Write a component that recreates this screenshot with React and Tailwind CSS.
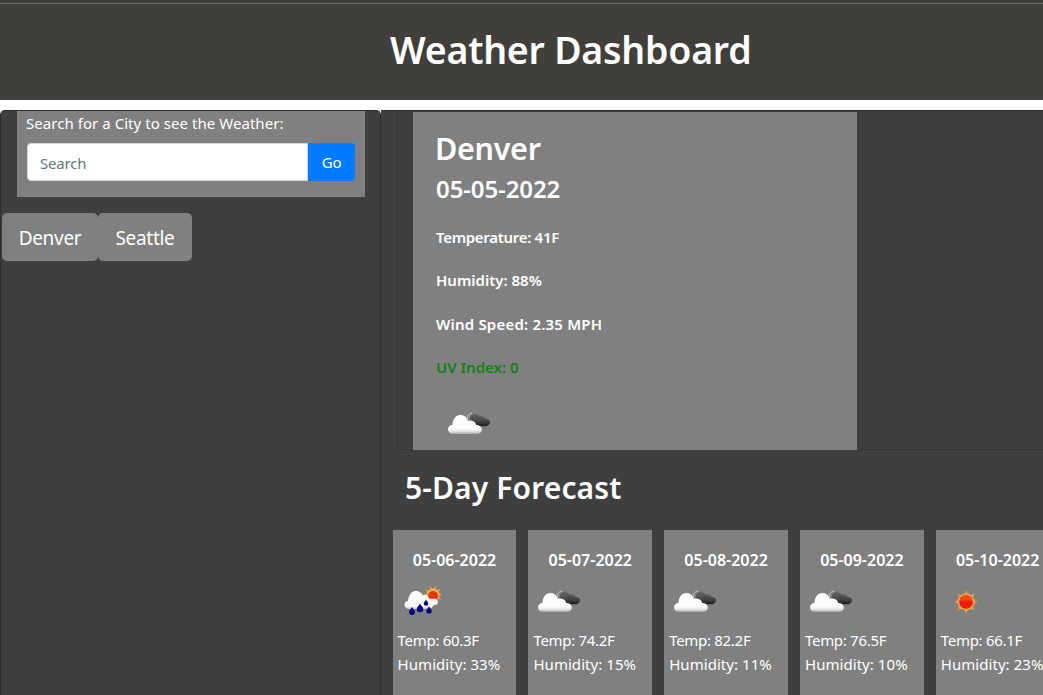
import React from "react";

function CloudIcon() {
  return (
    <svg width="50" height="50" viewBox="0 0 50 50" className="block">
      <defs>
        <linearGradient id="cw" x1="0" y1="0" x2="0" y2="1">
          <stop offset="0" stopColor="#ffffff" />
          <stop offset="0.72" stopColor="#fbfbfb" />
          <stop offset="0.86" stopColor="#e4e4e4" />
          <stop offset="1" stopColor="#a8a8a8" />
        </linearGradient>
        <linearGradient id="cd" x1="0" y1="0" x2="0" y2="1">
          <stop offset="0" stopColor="#666666" />
          <stop offset="0.6" stopColor="#444444" />
          <stop offset="1" stopColor="#1e1e1e" />
        </linearGradient>
      </defs>
      <path d="M24.500 23c-.8-3 .8-6.300 4.500-7" fill="none" stroke="#d0d0d0" strokeWidth="1" />
      <path d="M27 23c-.5-3 1.500-6 4.500-6 2.500 0 4.300 1 5.300 2.500 2.500-.5 4.500.3 5.500 2 2.700.2 4.700 1.700 4.700 3.700 0 2.300-2 4-5 4H32c-3 0-4.500-3-5-6.200z" fill="url(#cd)" />
      <path d="M10 37c-3 0-5-1.900-5-4.500 0-2.600 1.900-4.500 4.500-4.700.2-5.600 3.500-9.800 8-9.800 3.500 0 6.200 2.300 7.300 6 1-.5 2.500-.6 4-.3 2.500.5 4 2.200 4.400 4.300 3 0 5.600 1.800 5.600 4.500 0 2.800-2.400 4.500-5.500 4.500z" fill="url(#cw)" />
    </svg>
  );
}

function SunIcon() {
  const rays = [0, 45, 90, 135, 180, 225, 270, 315];
  return (
    <svg width="50" height="50" viewBox="0 0 50 50" className="block">
      {rays.map((a) => (
        <polygon key={a} points="25,15 22.800,20 27.200,20" fill="#d99a4e" transform={`rotate(${a} 25 27)`} />
      ))}
      <circle cx="25" cy="27" r="8.500" fill="#e8a54a" />
      <circle cx="25" cy="27" r="6.800" fill="#ee1c08" />
      <path d="M18.500 25.500a7 7 0 0 1 13 0z" fill="#f24a10" />
    </svg>
  );
}

function RainIcon() {
  const drop = (x, y, s) => (
    <path key={x} d={`M${x} ${y - s * 1.7}c${s * 0.4} ${s * 0.8} ${s} ${s * 1.1} ${s} ${s * 1.7}a${s} ${s} 0 0 1 ${-2 * s} 0c0 ${-s * 0.6} ${s * 0.6} ${-s * 0.9} ${s} ${-s * 1.7}z`} fill="#0a0a80" />
  );
  const rays = [-90, -55, -20, 15, 50, 85, 120];
  return (
    <svg width="50" height="50" viewBox="0 0 50 50" className="block">
      <defs>
        <linearGradient id="rw" x1="0" y1="0" x2="0" y2="1">
          <stop offset="0" stopColor="#ffffff" />
          <stop offset="0.85" stopColor="#f6f6f6" />
          <stop offset="1" stopColor="#cccccc" />
        </linearGradient>
      </defs>
      {rays.map((a) => (
        <polygon key={a} points="35,10 33.500,15 36.500,15" fill="#dba050" transform={`rotate(${a} 35 20)`} />
      ))}
      <circle cx="35" cy="20" r="6.500" fill="#efb050" />
      <circle cx="35" cy="21" r="5" fill="#e8340c" />
      <path d="M11 34c-2.500 0-4.500-1.700-4.500-4.200 0-2.200 1.500-3.800 3.600-4.100C10.500 20 13.500 16 18 16c3 0 5.500 1.700 6.800 4.300 1-.5 2.200-.7 3.200-.4 1.700.4 2.800 1.700 3 3.800h5.500c2 0 3.500 1.400 3.500 3.300 0 1.700-1.300 3-3 3-1 0-2 .6-2.500 1.500-.5 1.500-1.500 2.500-3 2.500z" fill="url(#rw)" />
      {drop(14, 37, 3)}
      {drop(22, 34, 3.300)}
      {drop(28, 28.500, 2.300)}
      {drop(31, 36, 2.800)}
    </svg>
  );
}

const days = [
  { d: "05-06-2022", t: "60.3", h: "33", I: RainIcon },
  { d: "05-07-2022", t: "74.2", h: "15", I: CloudIcon },
  { d: "05-08-2022", t: "82.2", h: "11", I: CloudIcon },
  { d: "05-09-2022", t: "76.5", h: "10", I: CloudIcon },
  { d: "05-10-2022", t: "66.1", h: "23", I: SunIcon },
];

export default function App() {
  return (
    <div className="h-[695px] w-[1043px] overflow-hidden bg-white text-white font-['Noto_Sans','Open_Sans',sans-serif]">
      <div className="h-[3px] bg-[#403f3b]" />
      <header className="h-[97px] bg-[#403f3b] border-t border-[#6a6a6a]">
        <h1 className="pt-[24px] pl-[390px] text-[37.5px] leading-[44px] font-semibold tracking-[-0.23px] whitespace-nowrap">Weather Dashboard</h1>
      </header>
      <div className="mt-[10px] flex h-[585px]">
        <aside className="w-[381px] shrink-0 bg-[#3f3f3f] rounded-t-[5px] border-l border-t border-r border-[#2e2e2e] flex flex-col">
          <section className="ml-[16px] w-[348px] h-[86px] bg-[#808080] pl-[9px] pt-px">
            <p className="text-[15px] leading-[22px] tracking-[0.05px] whitespace-nowrap">Search for a City to see the Weather:</p>
            <div className="mt-[9px] flex w-[328px] h-[38px] ml-px">
              <div className="flex-1 bg-white rounded-l-[4px] border border-[#ced4da] pl-[12px] text-[#6c757d] text-[15px] leading-[38px] tracking-[-0.2px]">Search</div>
              <div className="w-[47px] bg-[#007bff] rounded-r-[4px] text-center text-[15px] leading-[38px] tracking-[-0.3px]">Go</div>
            </div>
          </section>
          <div className="mt-[16px] ml-px flex">
            <div className="w-[96px] h-[48px] bg-[#808080] rounded-[5px] text-center text-[19px] leading-[50px] tracking-[-0.3px]">Denver</div>
            <div className="w-[94px] h-[48px] bg-[#808080] rounded-[5px] text-center text-[19px] leading-[50px] tracking-[-0.3px]">Seattle</div>
          </div>
        </aside>
        <main className="flex-1 min-w-0 bg-[#3f3f3f] border-t border-[#2e2e2e]">
          <div className="ml-[16px] h-[339px] border-l border-b border-[#353535] rounded-bl-[5px] pl-[15px] pt-px">
            <div className="w-[444px] h-[338px] bg-[#808080] pl-[23px]">
              <h2 className="pt-[16px] -ml-px text-[30.5px] leading-[40px] font-semibold tracking-[-0.3px]">Denver</h2>
              <h3 className="mt-[4px] text-[24px] leading-[34px] font-semibold tracking-[-0.1px]">05-05-2022</h3>
              <div className="mt-[19.500px] flex flex-col gap-[21.500px] text-[15px] leading-[22px] font-semibold">
                <p className="tracking-[-0.3px]">Temperature: 41F</p>
                <p>Humidity: 88%</p>
                <p className="tracking-[0.2px]">Wind Speed: 2.35 MPH</p>
                <p className="text-[#148214]">UV Index: 0</p>
              </div>
              <div className="mt-[18.500px] ml-[7px]"><CloudIcon /></div>
            </div>
          </div>
          <h2 className="mt-[18px] ml-[24px] text-[30px] leading-[40px] font-semibold tracking-[0.13px]">5-Day Forecast</h2>
          <div className="mt-[22px] ml-[11.600px] flex gap-[12px]">
            {days.map(({ d, t, h, I }) => (
              <article key={d} className="w-[123.800px] h-[170px] shrink-0 bg-[#808080] pl-[5px]">
                <p className="mt-[18px] pr-[5px] text-center text-[16px] leading-[24px] font-semibold whitespace-nowrap">{d}</p>
                <div className="mt-[3px]"><I /></div>
                <p className="mt-[3px] text-[15px] leading-[24px] tracking-[-0.3px] whitespace-nowrap">Temp: {t}F</p>
                <p className="text-[15px] leading-[24px] tracking-[0.05px] whitespace-nowrap">Humidity: {h}%</p>
              </article>
            ))}
          </div>
        </main>
      </div>
    </div>
  );
}
